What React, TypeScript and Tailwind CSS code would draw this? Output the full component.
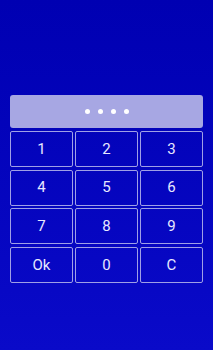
const keys = ['1', '2', '3', '4', '5', '6', '7', '8', '9', 'Ok', '0', 'C'];

export default function App() {
  return (
    <div
      className="h-[350px] w-full bg-gradient-to-b from-[#0000b2] to-[#0a0ac9] px-[10px] pt-[95px]"
      style={{ fontFamily: 'Roboto, "Noto Sans", sans-serif' }}
    >
      {/* Display */}
      <div className="flex h-[33px] items-center justify-center gap-[8px] rounded-[3px] bg-[#a7a7e3]">
        {[0, 1, 2, 3].map((i) => (
          <span key={i} className="h-[5px] w-[5px] rounded-full bg-white" />
        ))}
      </div>

      {/* Keypad */}
      <div className="mt-[3px] grid grid-cols-3 gap-x-[2px] gap-y-[2.67px]">
        {keys.map((k) => (
          <button
            key={k}
            className="flex h-[36px] items-center justify-center rounded-[2px] border border-[#a0a0e6] text-[15px] text-[#e8e8ff]"
          >
            {k}
          </button>
        ))}
      </div>
    </div>
  );
}
